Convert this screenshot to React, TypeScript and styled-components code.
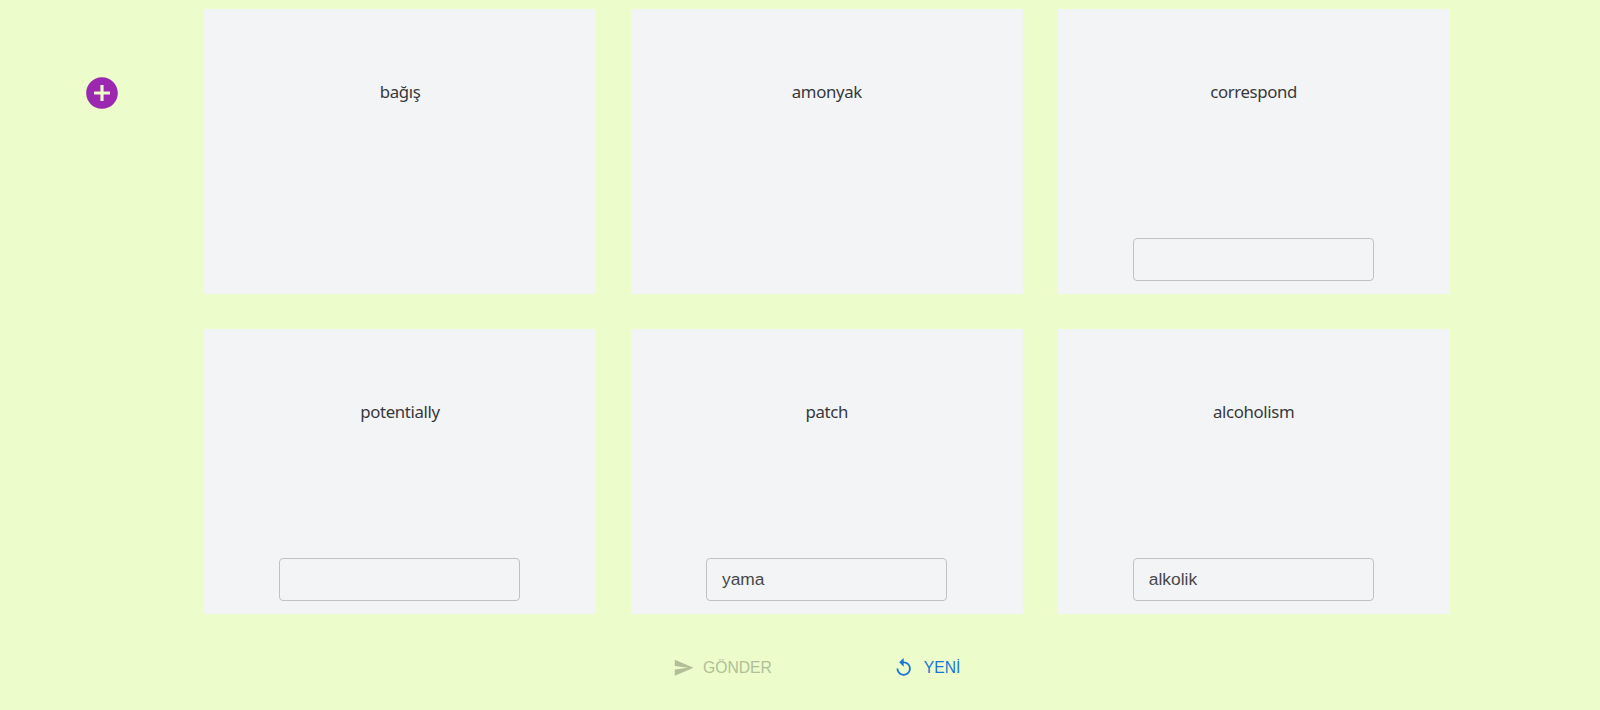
import React, { useState } from "react";
import styled, { createGlobalStyle } from "styled-components";

const GlobalStyle = createGlobalStyle`
  *, *::before, *::after { box-sizing: border-box; }
  body { margin: 0; background: #ecfccb; overflow: hidden; }
`;

const Page = styled.div`
  display: grid;
  grid-template-columns: 204px 1246px;
  height: 710px;
  background: #ecfccb;
  font-family: "Liberation Sans", Arial, sans-serif;
`;

const Sidebar = styled.aside`
  display: flex;
  justify-content: center;
  align-items: flex-start;
  padding: 74px 1px 0 0;
`;

const AddButton = styled.button`
  display: flex;
  padding: 0;
  border: 0;
  background: none;
  color: #9c27b0;
  cursor: pointer;
`;

const Icon = styled.svg<{ $size: number }>`
  display: block;
  flex: none;
  width: ${(p) => p.$size}px;
  height: ${(p) => p.$size}px;
  fill: currentColor;
`;

const Main = styled.main`
  padding-top: 9px;
`;

const CardGrid = styled.div`
  display: grid;
  grid-template-columns: repeat(3, 392px);
  grid-auto-rows: 285px;
  column-gap: 34.8px;
  row-gap: 35px;
`;

const Card = styled.section`
  display: flex;
  flex-direction: column;
  align-items: center;
  justify-content: space-between;
  padding: 70px 0 13px;
  background: #f3f4f6;
`;

const Word = styled.div`
  font: 16.8px/26px "Noto Sans", "Segoe UI", sans-serif;
  letter-spacing: -0.36px;
  color: #38393b;
`;

const Answer = styled.input`
  width: 241px;
  height: 43px;
  margin-right: 0.6px;
  padding: 0 15px;
  border: 1px solid #c0c1c3;
  border-radius: 4px;
  outline: 0;
  background: transparent;
  color: #47484a;
  font: 17.4px "Liberation Sans", Arial, sans-serif;
`;

const Actions = styled.div`
  display: flex;
  gap: 121.5px;
  padding: 41px 0 0 468.6px;
`;

const ActionButton = styled.button`
  display: flex;
  align-items: center;
  gap: 9px;
  height: 26px;
  padding: 0;
  border: 0;
  background: none;
  color: #1976d2;
  font: 15.7px/26px "Liberation Sans", Arial, sans-serif;
  cursor: pointer;
  &:disabled { color: #b1bf98; cursor: default; }
`;

const words = [
  { word: "bağış" },
  { word: "amonyak" },
  { word: "correspond", answer: "" },
  { word: "potentially", answer: "" },
  { word: "patch", answer: "yama" },
  { word: "alcoholism", answer: "alkolik" },
];

export default function App() {
  const [cards, setCards] = useState<{ word: string; answer?: string }[]>(words);
  const update = (index: number, answer: string) =>
    setCards(cards.map((card, i) => (i === index ? { ...card, answer } : card)));

  return (
    <>
      <GlobalStyle />
      <Page>
        <Sidebar>
          <AddButton aria-label="Ekle">
            <Icon $size={38} viewBox="0 0 24 24">
              <path d="M12 2C6.48 2 2 6.48 2 12s4.48 10 10 10 10-4.48 10-10S17.52 2 12 2zm5 11h-4v4h-2v-4H7v-2h4V7h2v4h4v2z" />
            </Icon>
          </AddButton>
        </Sidebar>
        <Main>
          <CardGrid>
            {cards.map((card, i) => (
              <Card key={card.word}>
                <Word>{card.word}</Word>
                {card.answer !== undefined && (
                  <Answer value={card.answer} onChange={(e) => update(i, e.target.value)} />
                )}
              </Card>
            ))}
          </CardGrid>
          <Actions>
            <ActionButton disabled>
              <Icon $size={21.4} viewBox="0 0 24 24">
                <path d="M2.01 21 23 12 2.01 3 2 10l15 2-15 2z" />
              </Icon>
              GÖNDER
            </ActionButton>
            <ActionButton>
              <Icon $size={21.4} viewBox="0 0 24 24">
                <path d="M12 5V1L7 6l5 5V7c3.31 0 6 2.69 6 6s-2.69 6-6 6-6-2.69-6-6H4c0 4.42 3.58 8 8 8s8-3.58 8-8-3.58-8-8-8z" />
              </Icon>
              YENİ
            </ActionButton>
          </Actions>
        </Main>
      </Page>
    </>
  );
}
